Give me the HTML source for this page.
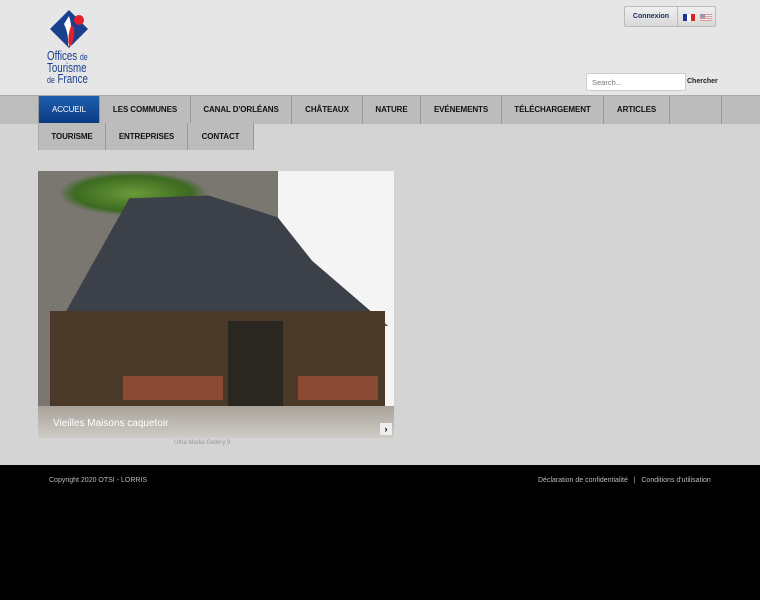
<!DOCTYPE html>
<html><head><meta charset="utf-8"><style>
*{margin:0;padding:0;box-sizing:border-box}
body{width:760px;height:600px;overflow:hidden;background:#d4d4d4;font-family:"Liberation Sans",Arial,sans-serif;position:relative}
.hdr{position:absolute;left:0;top:0;width:760px;height:95px;background:#e6e6e6}
.nav{position:absolute;left:0;top:95px;width:760px;height:28px;background:#bdbdbd;border-top:1px solid #aaa}
.it{position:absolute;height:28px;line-height:27px;text-align:center;font-size:8px;font-weight:bold;color:#111;border-right:1px solid #999;background:#bcbcbc;letter-spacing:-0.1px}
.r2 .it{height:27px}
.act{background:linear-gradient(#1e5fae,#0b3a80);color:#fff;font-weight:normal}
.foot{position:absolute;left:0;top:465px;width:760px;height:135px;background:#000;color:#bbb;font-size:7px}
</style></head><body>
<div class="hdr">
 <svg style="position:absolute;left:47px;top:8px" width="45" height="45" viewBox="0 0 45 45">
  <polygon points="22,2 41,21 22,40 3,21" fill="#1a3f8f"/>
  <path d="M22 8 Q26 20 24 38 L21 38 Q22 26 17 16 Z" fill="#fff"/>
  <path d="M26 18 Q30 28 22 40 Q20 28 24 18Z" fill="#e3202a"/>
  <circle cx="32" cy="12" r="5" fill="#e3202a"/>
 </svg>
 <div style="position:absolute;left:47px;top:51px;color:#1a3f8f;font-size:12.5px;line-height:11px;transform:scaleX(0.78);transform-origin:0 0;white-space:nowrap">Offices <span style="font-size:9px">de</span><br>Tourisme<br><span style="font-size:9px">de</span> France</div>
 <div style="position:absolute;left:624px;top:6px;width:92px;height:21px;border:1px solid #bbb;background:linear-gradient(#f0f0f0,#d8d8d8);border-radius:2px">
  <div style="position:absolute;left:0;top:0;width:53px;height:19px;border-right:1px solid #bbb;font-size:7px;font-weight:bold;color:#1a3060;text-align:center;line-height:19px">Connexion</div>
  <div style="position:absolute;left:58px;top:7px;width:12px;height:7px;background:linear-gradient(90deg,#22319a 33%,#fff 33%,#fff 66%,#d22 66%)"></div>
  <div style="position:absolute;left:75px;top:7px;width:12px;height:7px;background:repeating-linear-gradient(#d99 0 1px,#eee 1px 2px)"><div style="width:5px;height:4px;background:#99a"></div></div>
 </div>
 <div style="position:absolute;left:586px;top:73px;width:100px;height:18px;background:#fff;border:1px solid #ccc;border-radius:2px;font-size:7.5px;color:#777;padding:4px 5px">Search...</div>
 <div style="position:absolute;left:687px;top:78px;font-size:7px;font-weight:bold;color:#222">Chercher</div>
</div>
<div class="nav">
 <div class="it" style="left:0;width:39px;background:#bdbdbd"></div>
 <div class="it act" style="left:39px;width:61px">ACCUEIL</div>
 <div class="it" style="left:100px;width:91px">LES COMMUNES</div>
 <div class="it" style="left:191px;width:101px">CANAL D'ORLÉANS</div>
 <div class="it" style="left:292px;width:71px">CHÂTEAUX</div>
 <div class="it" style="left:363px;width:58px">NATURE</div>
 <div class="it" style="left:421px;width:81px">EVÉNEMENTS</div>
 <div class="it" style="left:502px;width:102px">TÉLÉCHARGEMENT</div>
 <div class="it" style="left:604px;width:66px">ARTICLES</div>
 <div class="it" style="left:670px;width:52px"></div>
 <div class="it" style="left:722px;width:38px;border:0"></div>
</div>
<div class="r2" style="position:absolute;top:123px;left:0">
 <div class="it" style="left:38px;width:68px;border-left:1px solid #aaa">TOURISME</div>
 <div class="it" style="left:106px;width:82px">ENTREPRISES</div>
 <div class="it" style="left:188px;width:66px">CONTACT</div>
</div>
<div style="position:absolute;left:38px;top:171px;width:356px;height:267px;overflow:hidden;background:#f4f4f4">
 <div style="position:absolute;left:0;top:0;width:240px;height:240px;background:#7a7670"></div>
 <div style="position:absolute;left:20px;top:0;width:150px;height:45px;background:radial-gradient(#6a9a3a,#3c6a20 55%,transparent 70%)"></div>
 <div style="position:absolute;left:5px;top:10px;width:345px;height:145px;background:#3c4048;clip-path:polygon(5% 97%,25% 12%,48% 10%,68% 25%,78% 55%,100% 100%)"></div>
 <div style="position:absolute;left:12px;top:140px;width:335px;height:95px;background:#4a3828"></div>
 <div style="position:absolute;left:190px;top:150px;width:55px;height:90px;background:#2a2620"></div>
 <div style="position:absolute;left:85px;top:205px;width:100px;height:24px;background:#8a4a34"></div>
 <div style="position:absolute;left:260px;top:205px;width:80px;height:24px;background:#8a4a34"></div>
 <div style="position:absolute;left:0;top:235px;width:356px;height:32px;background:linear-gradient(#a8a29a,#cfccc6);"></div>
 <div style="position:absolute;left:15px;top:247px;color:#fff;font-size:10px">Vieilles Maisons caquetoir</div>
 <div style="position:absolute;left:342px;top:252px;width:12px;height:12px;background:#eee;color:#000;font-size:9px;font-weight:bold;text-align:center;line-height:12px">›</div>
</div>
<div style="position:absolute;left:174px;top:440px;font-size:6px;color:#999">Ultra Media Gallery 9</div>
<div class="foot">
 <div style="position:absolute;left:49px;top:12px">Copyright 2020 OTSI - LORRIS</div>
 <div style="position:absolute;left:538px;top:12px">Déclaration de confidentialité &nbsp; | &nbsp; Conditions d'utilisation</div>
</div>
</body></html>
